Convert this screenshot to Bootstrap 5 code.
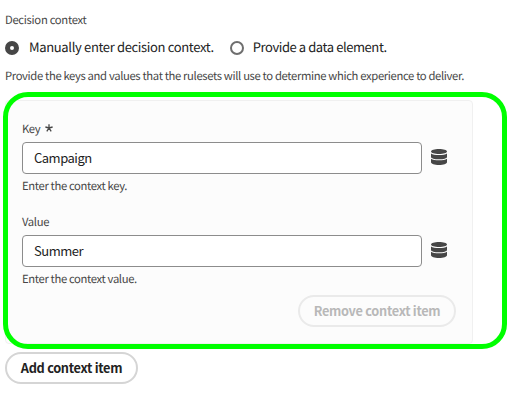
<!DOCTYPE html>
<html lang="en">
<head>
<meta charset="utf-8">
<meta name="viewport" content="width=device-width, initial-scale=1">
<title>Decision context</title>
<link href="https://cdn.jsdelivr.net/npm/bootstrap@5.3.0/dist/css/bootstrap.min.css" rel="stylesheet">
<style>
body{font-family:"Noto Sans CJK SC","Noto Sans",sans-serif;font-size:13px;letter-spacing:-.34px;color:#222;background:#fff;overflow:hidden;text-rendering:geometricPrecision}
.page{padding:12px 0 0 5px}
.tiny{font-size:11.25px;line-height:16px;height:16px;color:#464646;white-space:nowrap;letter-spacing:-.35px;margin:0;display:block}
.tiny.caption{letter-spacing:-.3px}
.choices{height:20px;margin:10px 0}
.choice{line-height:20px;white-space:nowrap}
.choice span{margin-top:-2px}
.choice + .choice span{letter-spacing:-.42px;margin-left:-1px}
.form-check-input.dot{width:14px;height:14px;margin:0 10px 0 0;border:2px solid #6e6e6e;background:#fff;float:none;flex:none}
.form-check-input.dot:checked{border:5px solid #464646;background:#fff}
.region{width:468px;height:244px;margin-top:16px}
.context{height:244px;border:1px solid #f0f0f0;border-radius:4px;background:#fcfcfc;padding:20px 16px 0 16px}
.marker{position:absolute;left:-2px;top:-8px;width:504px;height:257px;border:5px solid #00ff00;border-radius:25px;pointer-events:none}
.field{height:93px}
.field-last{height:81px}
.form-control.entry{width:400px;height:32px;border:1px solid #8c8c8c;border-radius:4px;padding:0 11px 2px;font-size:13px;letter-spacing:-.5px;line-height:28px;color:#222;background:#fff}
.entry-row{margin:5px 0 4px;gap:9px}
.entry-row svg{margin-bottom:2px}
.pill{height:32px;border:2px solid #d5d5d5;border-radius:16px;padding:0;line-height:26px;font-size:12.75px;letter-spacing:-.29px;font-weight:700;color:#222;white-space:nowrap}
.pill:disabled{border-color:#eaeaea;color:#b8b8b8;opacity:1}
.pill-remove{width:158px}
.pill-add{width:133px;margin-top:8px}
.star{margin-left:3px;margin-top:-4px}
</style>
<script src="https://cdn.jsdelivr.net/npm/bootstrap@5.3.0/dist/js/bootstrap.bundle.min.js" defer></script>
</head>
<body>
<main class="page">
  <div class="tiny caption">Decision context</div>
  <div class="choices d-flex align-items-center">
    <label class="choice d-flex align-items-center me-3"><input class="form-check-input dot" type="radio" name="mode" checked><span>Manually enter decision context.</span></label>
    <label class="choice d-flex align-items-center"><input class="form-check-input dot" type="radio" name="mode"><span>Provide a data element.</span></label>
  </div>
  <p class="tiny">Provide the keys and values that the rulesets will use to determine which experience to deliver.</p>
  <section class="region position-relative">
    <div class="context">
      <div class="field">
        <label class="tiny" for="key">Key <svg class="star" width="8" height="8" viewBox="0 0 8 8" fill="none" stroke="#464646" stroke-width="1.3"><path d="M4 4V.2M4 4L.4 3M4 4l3.600-1M4 4L1.800 7.400M4 4l2.200 3.400"/></svg></label>
        <div class="entry-row d-flex align-items-center">
          <input class="form-control entry" id="key" value="Campaign">
          <svg width="16" height="16" viewBox="0 0 16 16" fill="#464646"><path d="M0 2.5C0 1 3.5 0 8 0s8 1 8 2.5S12.500 5 8 5 0 4 0 2.500Z"/><path d="M0 4.400C1.500 5.600 4.500 6 8 6s6.500-.4 8-1.600V8c0 1.400-3.500 2.300-8 2.300S0 9.400 0 8Z"/><path d="M0 9.700c1.500 1.200 4.500 1.600 8 1.600s6.500-.4 8-1.600v3.600C16 14.900 12.500 16 8 16s-8-1.100-8-2.700Z"/></svg>
        </div>
        <div class="tiny">Enter the context key.</div>
      </div>
      <div class="field field-last">
        <label class="tiny" for="value">Value</label>
        <div class="entry-row d-flex align-items-center">
          <input class="form-control entry" id="value" value="Summer">
          <svg width="16" height="16" viewBox="0 0 16 16" fill="#464646"><path d="M0 2.5C0 1 3.5 0 8 0s8 1 8 2.5S12.500 5 8 5 0 4 0 2.500Z"/><path d="M0 4.400C1.500 5.600 4.500 6 8 6s6.500-.4 8-1.600V8c0 1.400-3.500 2.300-8 2.300S0 9.400 0 8Z"/><path d="M0 9.700c1.500 1.200 4.500 1.600 8 1.600s6.500-.4 8-1.600v3.600C16 14.900 12.500 16 8 16s-8-1.100-8-2.700Z"/></svg>
        </div>
        <div class="tiny">Enter the context value.</div>
      </div>
      <div class="d-flex justify-content-end"><button class="btn pill pill-remove" disabled>Remove context item</button></div>
    </div>
    <div class="marker"></div>
  </section>
  <button class="btn pill pill-add">Add context item</button>
</main>
</body>
</html>
